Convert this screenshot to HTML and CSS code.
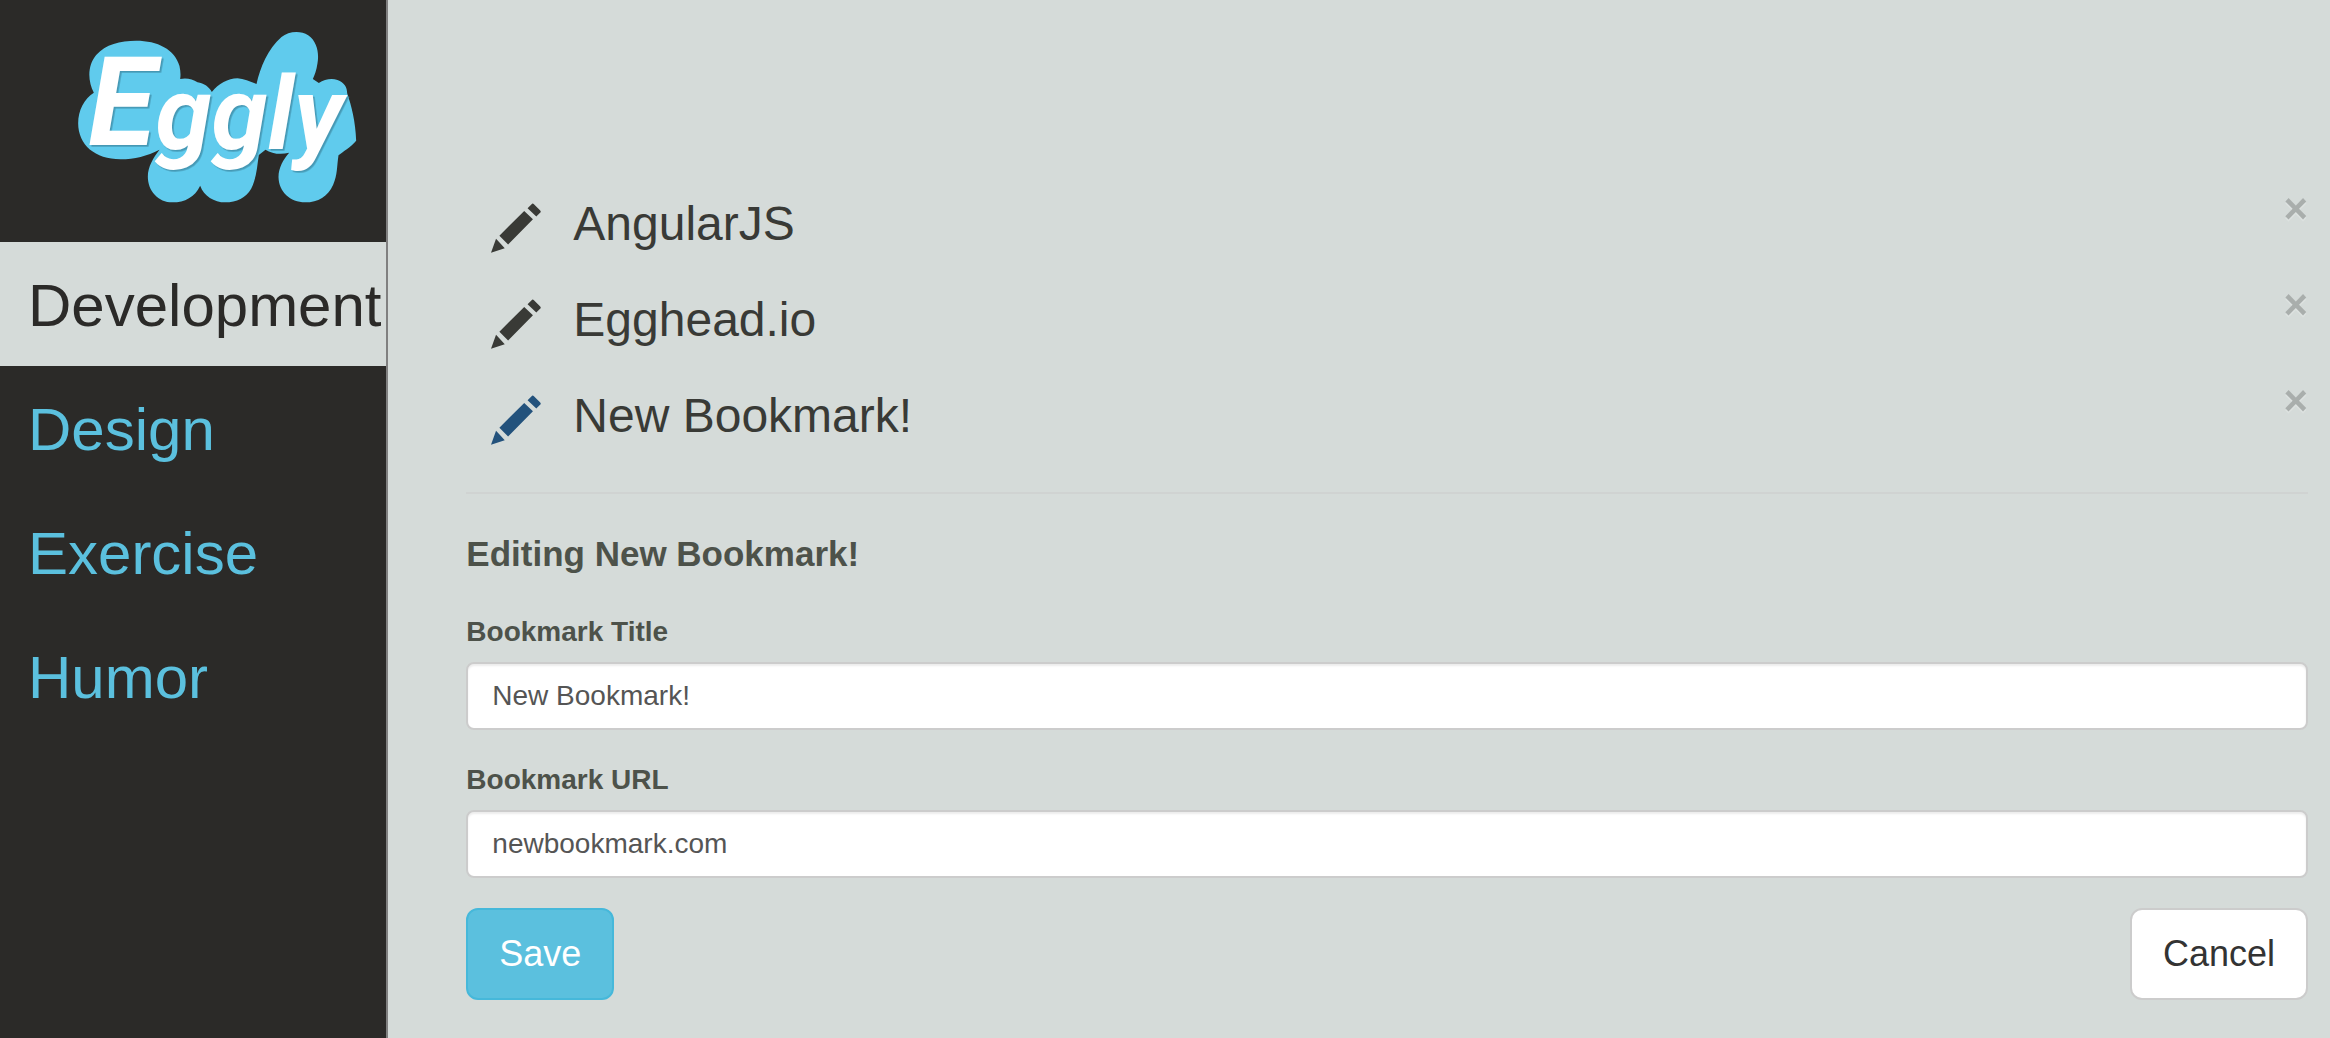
FILE: index.html
```html
<!DOCTYPE html>
<html lang="en">
<head>
  <meta charset="utf-8">
  <title>Eggly</title>
  <link rel="stylesheet" href="styles.css">
</head>
<body>
  <svg class="sprite" aria-hidden="true">
    <symbol id="pencil" viewBox="123 70 149 148">
      <path d="M123 218L138 176Q151 190 164 204ZM148 167L222 93L248 118L174 193ZM232 85L244 73Q247 69 251 73L269 91Q273 95 270 98L258 110Z"/>
    </symbol>
  </svg>

  <div class="app">
    <aside class="sidebar">
      <a class="brand" href="#" aria-label="Eggly">
        <svg class="logo" viewBox="54 36 834 510">
          <path fill="#60cbed" d="M54 310C54 270 72 237 101 218C82 182 82 136 108 105C136 73 180 62 228 62C292 62 344 88 358 138C361 152 362 165 360 177C378 173 398 177 412 187C432 190 447 201 455 216C475 191 504 175 532 175C551 176 570 185 589 192C600 143 623 86 664 51C684 34 721 30 744 46C772 65 777 102 772 130C769 151 763 167 758 177L776 189C793 178 814 174 832 180C852 187 861 202 861 220C874 258 886 305 888 362C870 383 849 394 835 406C830 438 832 466 819 494C803 530 774 547 735 547C690 547 656 516 655 471C655 443 670 417 687 398C661 405 635 401 616 389L596 405C591 438 589 475 573 506C557 533 530 547 495 547C462 547 431 528 420 497C404 531 374 547 337 547C294 547 263 512 263 470C263 440 280 412 298 389C260 408 224 418 181 418C105 418 54 375 54 310Z"/>
          <text class="logo-text" x="84" y="376"><tspan class="logo-cap">E</tspan><tspan dy="12">ggly</tspan></text>
        </svg>
      </a>
      <nav class="categories">
        <a class="category active" href="#">Development</a>
        <a class="category" href="#">Design</a>
        <a class="category" href="#">Exercise</a>
        <a class="category" href="#">Humor</a>
      </nav>
    </aside>

    <main class="main">
      <ul class="bookmarks">
        <li class="bookmark">
          <button class="edit" type="button" aria-label="Edit AngularJS"><svg><use href="#pencil"/></svg></button>
          <a class="bookmark-link" href="#">AngularJS</a>
          <button class="close" type="button" aria-label="Delete AngularJS">×</button>
        </li>
        <li class="bookmark">
          <button class="edit" type="button" aria-label="Edit Egghead.io"><svg><use href="#pencil"/></svg></button>
          <a class="bookmark-link" href="#">Egghead.io</a>
          <button class="close" type="button" aria-label="Delete Egghead.io">×</button>
        </li>
        <li class="bookmark">
          <button class="edit current" type="button" aria-label="Edit New Bookmark!"><svg><use href="#pencil"/></svg></button>
          <a class="bookmark-link" href="#">New Bookmark!</a>
          <button class="close" type="button" aria-label="Delete New Bookmark!">×</button>
        </li>
      </ul>

      <hr class="divider">

      <form class="editor">
        <h4 class="editor-title">Editing New Bookmark!</h4>
        <div class="field">
          <label for="title">Bookmark Title</label>
          <input id="title" type="text" value="New Bookmark!">
        </div>
        <div class="field">
          <label for="url">Bookmark URL</label>
          <input id="url" type="text" value="newbookmark.com">
        </div>
        <div class="actions">
          <button class="btn btn-info" type="submit">Save</button>
          <button class="btn" type="button">Cancel</button>
        </div>
      </form>
    </main>
  </div>
</body>
</html>
```
FILE: styles.css
```css
* {
  box-sizing: border-box;
}

body {
  margin: 0;
  background: #d5dbd9;
  color: #4d524a;
  font-family: "Liberation Sans", Arial, sans-serif;
  font-size: 28px;
}

a {
  text-decoration: none;
}

button,
input {
  font-family: inherit;
}

.sprite {
  display: none;
}

.app {
  display: grid;
  grid-template-columns: 1fr 5fr;
  min-height: 100vh;
}

/* Sidebar */
.sidebar {
  min-width: 0;
  background: #2b2a28;
  border-right: 2px solid #808080;
}

.brand {
  display: block;
  padding: 32px 30px 40px 78px;
}

.logo {
  display: block;
  width: 100%;
  height: 170px;
  overflow: visible;
}

.logo-text {
  fill: #fff;
  filter: drop-shadow(5px 5px 1px #4598b4);
  font-family: Roboto, sans-serif;
  font-size: 304px;
  font-style: italic;
  font-weight: 700;
}

.logo-cap {
  font-size: 370px;
}

.category {
  display: block;
  padding: 22px 0 18px 28px;
  color: #5bc0de;
  font-size: 60px;
  line-height: 84px;
}

.category.active {
  background: #d5dbd9;
  color: #2b2a28;
}

/* Bookmarks */
.main {
  min-width: 0;
  padding: 175px 22px 38px 78px;
}

.bookmarks {
  margin: 0;
  padding: 0;
  list-style: none;
}

.bookmark {
  display: flex;
  align-items: center;
  height: 96px;
  padding-left: 25px;
}

.edit {
  margin: 10px 32px 0 0;
  padding: 0;
  border: 0;
  background: none;
  color: #393a36;
}

.edit.current {
  color: #23527c;
}

.edit svg {
  display: block;
  width: 50px;
  height: 50px;
  fill: currentColor;
}

.bookmark-link {
  flex: 1;
  color: #393a36;
  font-size: 48px;
}

.close {
  align-self: flex-start;
  margin-top: 13px;
  padding: 0;
  border: 0;
  background: none;
  color: #000;
  font-size: 42px;
  font-weight: 700;
  line-height: 42px;
  opacity: 0.2;
  text-shadow: 0 2px 0 #fff;
}

.divider {
  height: 2px;
  margin: 29px 0 40px;
  border: 0;
  background: #d0d3d2;
}

/* Editor */
.editor-title {
  margin: 0 0 38px;
  font-size: 35px;
  line-height: 40px;
}

.field {
  display: grid;
  gap: 10px;
  margin-bottom: 30px;
}

.field label {
  font-weight: 700;
  line-height: 40px;
}

.field input {
  width: 100%;
  height: 68px;
  padding: 12px 24px;
  border: 2px solid #ccc;
  border-radius: 8px;
  background: #fff;
  box-shadow: inset 0 2px 2px rgba(0, 0, 0, 0.075);
  color: #555;
  font-size: 28px;
}

.actions {
  display: flex;
  justify-content: space-between;
}

.btn {
  height: 92px;
  padding: 0 31px;
  border: 2px solid #ccc;
  border-radius: 12px;
  background: #fff;
  color: #333;
  font-size: 36px;
}

.btn-info {
  border-color: #46b8da;
  background: #5bc0de;
  color: #fff;
}
```
